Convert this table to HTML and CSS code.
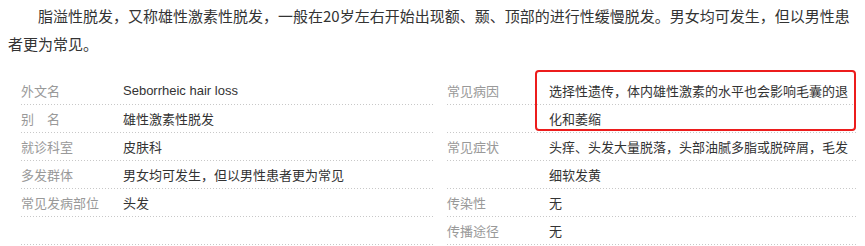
FILE: index.html
```html
<!DOCTYPE html>
<html lang="zh-CN">
<head>
    <meta charset="UTF-8">
    <meta name="viewport" content="width=device-width, initial-scale=1.0">
    <title>脂溢性脱发</title>
    <link rel="stylesheet" href="styles.css">
</head>
<body>
    <div class="lemma-summary">
        <p>脂溢性脱发，又称雄性激素性脱发，一般在20岁左右开始出现额、颞、顶部的进行性缓慢脱发。男女均可发生，但以男性患者更为常见。</p>
    </div>

    <div class="basic-info">
        <div class="info-col">
            <dl class="info-item">
                <dt><span class="line">外文名</span></dt>
                <dd><span class="line latin">Seborrheic hair loss</span></dd>
            </dl>
            <dl class="info-item">
                <dt><span class="line">别　名</span></dt>
                <dd><span class="line">雄性激素性脱发</span></dd>
            </dl>
            <dl class="info-item">
                <dt><span class="line">就诊科室</span></dt>
                <dd><span class="line">皮肤科</span></dd>
            </dl>
            <dl class="info-item">
                <dt><span class="line">多发群体</span></dt>
                <dd><span class="line">男女均可发生，但以男性患者更为常见</span></dd>
            </dl>
            <dl class="info-item">
                <dt><span class="line">常见发病部位</span></dt>
                <dd><span class="line">头发</span></dd>
            </dl>
            <dl class="info-item">
                <dt><span class="line"></span></dt>
                <dd><span class="line"></span></dd>
            </dl>
        </div>

        <div class="info-col">
            <dl class="info-item">
                <dt><span class="line">常见病因</span><span class="line"></span></dt>
                <dd class="marked">
                    <span class="line">选择性遗传，体内雄性激素的水平也会影响毛囊的退</span>
                    <span class="line">化和萎缩</span>
                </dd>
            </dl>
            <dl class="info-item">
                <dt><span class="line">常见症状</span><span class="line"></span></dt>
                <dd>
                    <span class="line">头痒、头发大量脱落，头部油腻多脂或脱碎屑，毛发</span>
                    <span class="line">细软发黄</span>
                </dd>
            </dl>
            <dl class="info-item">
                <dt><span class="line">传染性</span></dt>
                <dd><span class="line">无</span></dd>
            </dl>
            <dl class="info-item">
                <dt><span class="line">传播途径</span></dt>
                <dd><span class="line">无</span></dd>
            </dl>
        </div>
    </div>
</body>
</html>
```

FILE: styles.css
```css
body {
    font-family: "Noto Sans CJK SC", "Liberation Sans", sans-serif;
    margin: 2px 8px 0;
    padding: 0;
    background-color: #fff;
    color: #333;
}
.lemma-summary p {
    margin: 0 0 19px;
    font-size: 15px;
    line-height: 28px;
    text-indent: 2em;
}
.basic-info {
    display: grid;
    grid-template-columns: 426px 1fr;
    font-size: 13px;
}
.info-item {
    display: flex;
    margin: 0;
}
.info-item dt {
    width: 115px;
    padding-left: 13px;
    box-sizing: border-box;
    color: #999;
    flex-shrink: 0;
}
.info-item dd {
    flex: 1;
    margin: 0;
    color: #333;
}
.line {
    display: block;
    height: 28px;
    line-height: 28px;
    white-space: nowrap;
    /* dotted rule under every line */
    background-image: linear-gradient(to right, #c8c8c8 1px, transparent 1px);
    background-size: 3px 1px;
    background-repeat: repeat-x;
    background-position: left bottom;
}
.latin {
    font-family: "Liberation Sans", "Noto Sans CJK SC", sans-serif;
}
.marked {
    position: relative;
}
.marked::after {
    content: "";
    position: absolute;
    top: -7px;
    left: -14px;
    right: 1px;
    bottom: 2px;
    border: 2px solid #ec1c1c;
    border-radius: 4px;
}
```
